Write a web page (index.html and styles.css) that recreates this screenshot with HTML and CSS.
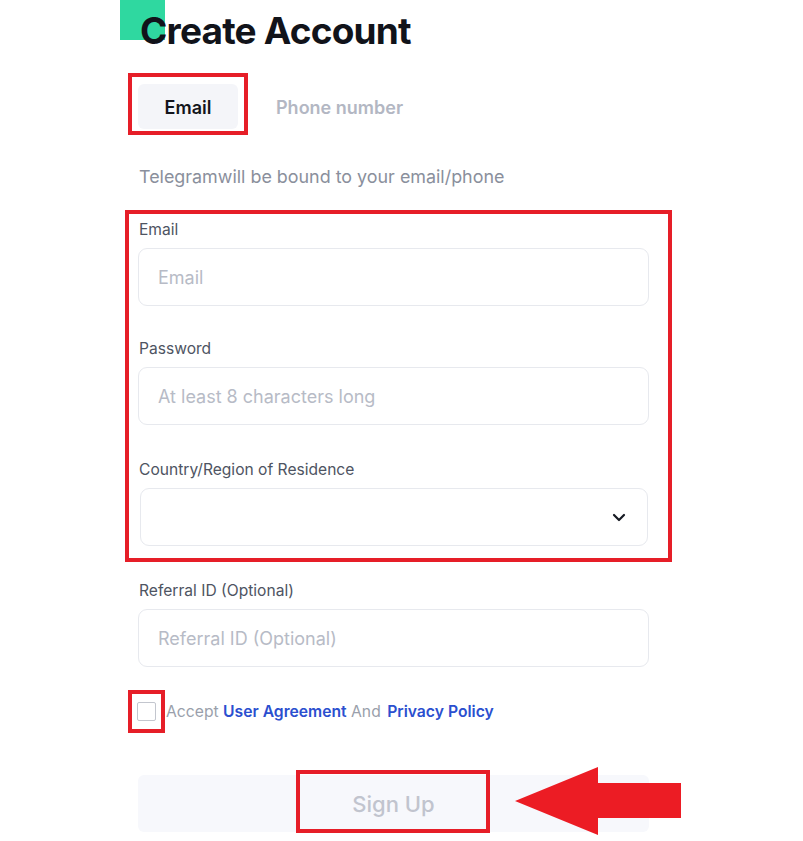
FILE: index.html
```html
<!DOCTYPE html>
<html lang="en">
<head>
<meta charset="utf-8">
<title>Create Account</title>
<link rel="stylesheet" href="styles.css">
</head>
<body>
<div class="page">
  <div class="accent"></div>
  <h1 class="title">Create Account</h1>

  <div class="tabs">
    <div class="tab tab-active">Email<span class="mark mark-tab"></span></div>
    <div class="tab tab-idle">Phone number</div>
  </div>

  <p class="subtitle">Telegramwill be bound to your email/phone</p>

  <div class="group">
    <span class="mark mark-group"></span>
    <div class="field">
      <label class="label">Email</label>
      <div class="input"><span class="ph">Email</span></div>
    </div>
    <div class="field field-2">
      <label class="label">Password</label>
      <div class="input"><span class="ph">At least 8 characters long</span></div>
    </div>
    <div class="field field-3">
      <label class="label">Country/Region of Residence</label>
      <div class="input select">
        <svg class="chev" width="14" height="9" viewBox="0 0 14 9"><path d="M2 2 L7 7 L12 2" fill="none" stroke="#161a23" stroke-width="2.2" stroke-linecap="round" stroke-linejoin="round"/></svg>
      </div>
    </div>
  </div>

  <div class="field field-4">
    <label class="label">Referral ID (Optional)</label>
    <div class="input"><span class="ph">Referral ID (Optional)</span></div>
  </div>

  <div class="agree">
    <span class="check"><span class="mark mark-check"></span></span>
    <span class="agree-text">Accept <a class="link">User Agreement</a> And <a class="link link-2">Privacy Policy</a></span>
  </div>

  <div class="submit">
    <span class="submit-text">Sign Up</span>
    <span class="mark mark-submit"></span>
    <svg class="arrow" width="166" height="68" viewBox="0 0 166 68"><polygon points="0,34 83,0 83,16 166,16 166,51 83,51 83,68" fill="#ec1c24"/></svg>
  </div>
</div>
</body>
</html>
```

FILE: styles.css
```css
* { box-sizing: border-box; }
html, body { margin: 0; padding: 0; background: #ffffff; }
body { font-family: Inter, "Noto Sans", "Liberation Sans", sans-serif; color: #13151c; }

.page {
  position: relative;
  width: 803px;
  height: 841px;
  padding: 8px 0 0 138px;
  overflow: hidden;
}

.accent {
  position: absolute;
  left: 120px;
  top: 0;
  width: 45px;
  height: 40px;
  background: #2fd8a0;
}

.title {
  position: relative;
  margin: 0 0 0 2px;
  font-size: 37px;
  line-height: 46px;
  font-weight: 700;
  color: #11131a;
  letter-spacing: -0.8px;
}

.mark {
  position: absolute;
  border: 4px solid #e61e28;
  pointer-events: none;
}

.tabs {
  display: flex;
  align-items: center;
  margin-top: 31px;
  height: 42px;
}
.tab {
  font-size: 18px;
  font-weight: 600;
  line-height: 42px;
  padding-top: 3px;
}
.tab-active {
  position: relative;
  width: 100px;
  text-align: center;
  background: #f4f5f9;
  border-radius: 6px;
  color: #13151c;
}
.mark-tab { left: -10px; right: -10px; top: -11px; bottom: -6px; }
.tab-idle { margin-left: 38px; color: #b3b7c3; }

.subtitle {
  margin: 38px 0 0 1px;
  font-size: 17.9px;
  line-height: 24px;
  color: #8a8f9c;
}

.group {
  position: relative;
  margin-top: 31px;
  width: 511px;
}
.mark-group { left: -13px; right: -23px; top: -10px; bottom: -16px; }

.field { width: 511px; }
.field-2 { margin-top: 33px; }
.field-3 { margin-top: 35px; }
.field-4 { margin-top: 35px; }

.label {
  display: block;
  margin-left: 1px;
  font-size: 15.6px;
  font-weight: 400;
  line-height: 20px;
  color: #4e5462;
  margin-bottom: 8px;
}

.input {
  height: 58px;
  border: 1px solid #e7e9ee;
  border-radius: 9px;
  padding-left: 19px;
  display: flex;
  align-items: center;
  background: #fff;
}
.ph { font-size: 18px; color: #b7bbc6; }
.select {
  margin-left: 2px;
  width: 508px;
  justify-content: flex-end;
  padding-right: 21px;
}
.chev { display: block; }

.agree {
  margin-top: 32px;
  display: flex;
  align-items: center;
  height: 24px;
}
.check {
  position: relative;
  width: 19px;
  height: 19px;
  border: 1px solid #c3c6ce;
  border-radius: 2px;
  margin-left: -1px;
}
.mark-check { left: -10px; right: -10px; top: -13px; bottom: -13px; }
.agree-text {
  margin-left: 10px;
  font-size: 15.7px;
  color: #9a9fab;
}
.link { color: #2b4fcf; font-weight: 600; }
.link-2 { margin-left: 2px; }

.submit {
  position: relative;
  margin-top: 52px;
  width: 511px;
  height: 57px;
  background: #f7f8fc;
  border-radius: 6px;
  display: flex;
  align-items: center;
  justify-content: center;
}
.submit-text { font-size: 22px; font-weight: 500; color: #c1c4ce; padding-top: 1px; }
.mark-submit { left: 158px; top: -5px; width: 194px; height: 63px; }
.arrow { position: absolute; left: 377px; top: -8px; }
```
